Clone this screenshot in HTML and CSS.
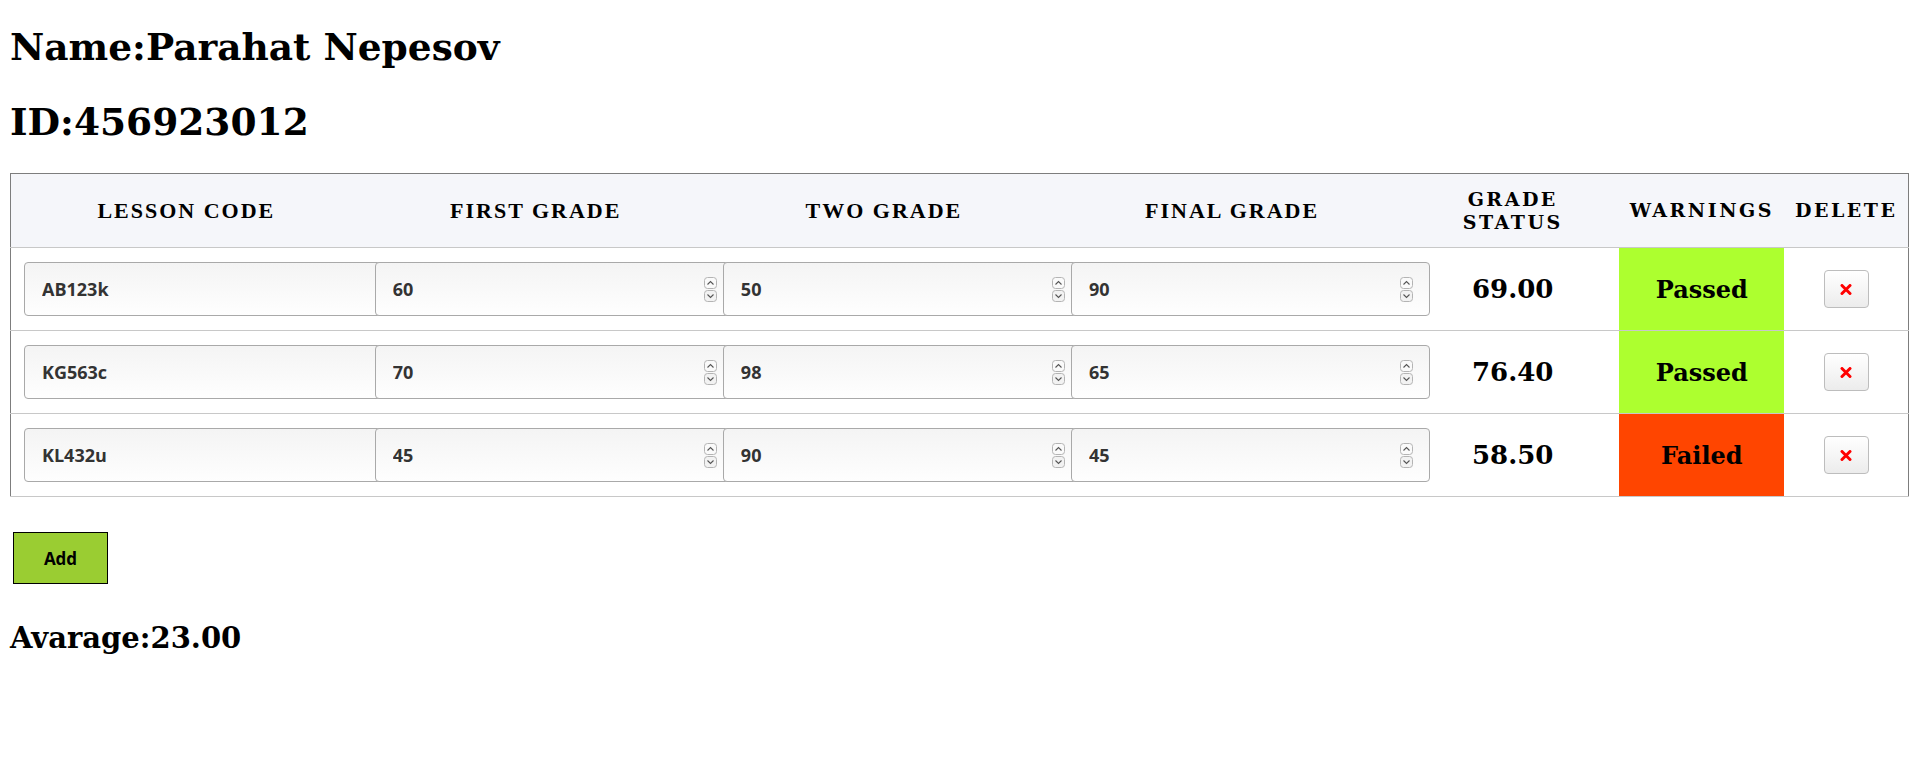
FILE: index.html
```html
<!DOCTYPE html>
<html>
<head>
<meta charset="utf-8">
<link rel="stylesheet" href="styles.css">
</head>
<body>
<h1 class="title first">Name:Parahat Nepesov</h1>
<h1 class="title">ID:456923012</h1>
<table class="grades">
  <colgroup>
    <col class="c-code">
    <col class="c-grade">
    <col class="c-grade">
    <col class="c-grade">
    <col class="c-status">
    <col class="c-warn">
    <col class="c-del">
  </colgroup>
  <thead>
    <tr>
      <th class="cond">LESSON CODE</th>
      <th class="cond">FIRST GRADE</th>
      <th class="cond">TWO GRADE</th>
      <th class="cond">FINAL GRADE</th>
      <th class="st">GRADE STATUS</th>
      <th>WARNINGS</th>
      <th>DELETE</th>
    </tr>
  </thead>
  <tbody>
    <tr>
      <td><div class="wrap"><input class="field" type="text" value="AB123k"></div></td>
      <td><div class="wrap"><input class="field" type="number" value="60"><svg class="spin" width="13" height="25" viewBox="0 0 13 25"><rect x="0.5" y="0.5" width="12" height="11" rx="3" fill="#fafafa" stroke="#b4b4b4"/><rect x="0.5" y="13.5" width="12" height="11" rx="3" fill="#f2f2f2" stroke="#b4b4b4"/><polyline points="3.5,7.5 6.5,4.5 9.5,7.5" fill="none" stroke="#555" stroke-width="1.1"/><polyline points="3.5,17.5 6.5,20.5 9.5,17.5" fill="none" stroke="#555" stroke-width="1.1"/></svg></div></td>
      <td><div class="wrap"><input class="field" type="number" value="50"><svg class="spin" width="13" height="25" viewBox="0 0 13 25"><rect x="0.5" y="0.5" width="12" height="11" rx="3" fill="#fafafa" stroke="#b4b4b4"/><rect x="0.5" y="13.5" width="12" height="11" rx="3" fill="#f2f2f2" stroke="#b4b4b4"/><polyline points="3.5,7.5 6.5,4.5 9.5,7.5" fill="none" stroke="#555" stroke-width="1.1"/><polyline points="3.5,17.5 6.5,20.5 9.5,17.5" fill="none" stroke="#555" stroke-width="1.1"/></svg></div></td>
      <td><div class="wrap"><input class="field" type="number" value="90"><svg class="spin" width="13" height="25" viewBox="0 0 13 25"><rect x="0.5" y="0.5" width="12" height="11" rx="3" fill="#fafafa" stroke="#b4b4b4"/><rect x="0.5" y="13.5" width="12" height="11" rx="3" fill="#f2f2f2" stroke="#b4b4b4"/><polyline points="3.5,7.5 6.5,4.5 9.5,7.5" fill="none" stroke="#555" stroke-width="1.1"/><polyline points="3.5,17.5 6.5,20.5 9.5,17.5" fill="none" stroke="#555" stroke-width="1.1"/></svg></div></td>
      <td class="score">69.00</td>
      <td class="warn passed">Passed</td>
      <td class="del"><button class="delbtn"><svg width="12" height="11" viewBox="0 0 12 11"><path d="M2 1.5 L10 9.5 M10 1.5 L2 9.5" stroke="#f00" stroke-width="3" stroke-linecap="round"/></svg></button></td>
    </tr>
    <tr>
      <td><div class="wrap"><input class="field" type="text" value="KG563c"></div></td>
      <td><div class="wrap"><input class="field" type="number" value="70"><svg class="spin" width="13" height="25" viewBox="0 0 13 25"><rect x="0.5" y="0.5" width="12" height="11" rx="3" fill="#fafafa" stroke="#b4b4b4"/><rect x="0.5" y="13.5" width="12" height="11" rx="3" fill="#f2f2f2" stroke="#b4b4b4"/><polyline points="3.5,7.5 6.5,4.5 9.5,7.5" fill="none" stroke="#555" stroke-width="1.1"/><polyline points="3.5,17.5 6.5,20.5 9.5,17.5" fill="none" stroke="#555" stroke-width="1.1"/></svg></div></td>
      <td><div class="wrap"><input class="field" type="number" value="98"><svg class="spin" width="13" height="25" viewBox="0 0 13 25"><rect x="0.5" y="0.5" width="12" height="11" rx="3" fill="#fafafa" stroke="#b4b4b4"/><rect x="0.5" y="13.5" width="12" height="11" rx="3" fill="#f2f2f2" stroke="#b4b4b4"/><polyline points="3.5,7.5 6.5,4.5 9.5,7.5" fill="none" stroke="#555" stroke-width="1.1"/><polyline points="3.5,17.5 6.5,20.5 9.5,17.5" fill="none" stroke="#555" stroke-width="1.1"/></svg></div></td>
      <td><div class="wrap"><input class="field" type="number" value="65"><svg class="spin" width="13" height="25" viewBox="0 0 13 25"><rect x="0.5" y="0.5" width="12" height="11" rx="3" fill="#fafafa" stroke="#b4b4b4"/><rect x="0.5" y="13.5" width="12" height="11" rx="3" fill="#f2f2f2" stroke="#b4b4b4"/><polyline points="3.5,7.5 6.5,4.5 9.5,7.5" fill="none" stroke="#555" stroke-width="1.1"/><polyline points="3.5,17.5 6.5,20.5 9.5,17.5" fill="none" stroke="#555" stroke-width="1.1"/></svg></div></td>
      <td class="score">76.40</td>
      <td class="warn passed">Passed</td>
      <td class="del"><button class="delbtn"><svg width="12" height="11" viewBox="0 0 12 11"><path d="M2 1.5 L10 9.5 M10 1.5 L2 9.5" stroke="#f00" stroke-width="3" stroke-linecap="round"/></svg></button></td>
    </tr>
    <tr>
      <td><div class="wrap"><input class="field" type="text" value="KL432u"></div></td>
      <td><div class="wrap"><input class="field" type="number" value="45"><svg class="spin" width="13" height="25" viewBox="0 0 13 25"><rect x="0.5" y="0.5" width="12" height="11" rx="3" fill="#fafafa" stroke="#b4b4b4"/><rect x="0.5" y="13.5" width="12" height="11" rx="3" fill="#f2f2f2" stroke="#b4b4b4"/><polyline points="3.5,7.5 6.5,4.5 9.5,7.5" fill="none" stroke="#555" stroke-width="1.1"/><polyline points="3.5,17.5 6.5,20.5 9.5,17.5" fill="none" stroke="#555" stroke-width="1.1"/></svg></div></td>
      <td><div class="wrap"><input class="field" type="number" value="90"><svg class="spin" width="13" height="25" viewBox="0 0 13 25"><rect x="0.5" y="0.5" width="12" height="11" rx="3" fill="#fafafa" stroke="#b4b4b4"/><rect x="0.5" y="13.5" width="12" height="11" rx="3" fill="#f2f2f2" stroke="#b4b4b4"/><polyline points="3.5,7.5 6.5,4.5 9.5,7.5" fill="none" stroke="#555" stroke-width="1.1"/><polyline points="3.5,17.5 6.5,20.5 9.5,17.5" fill="none" stroke="#555" stroke-width="1.1"/></svg></div></td>
      <td><div class="wrap"><input class="field" type="number" value="45"><svg class="spin" width="13" height="25" viewBox="0 0 13 25"><rect x="0.5" y="0.5" width="12" height="11" rx="3" fill="#fafafa" stroke="#b4b4b4"/><rect x="0.5" y="13.5" width="12" height="11" rx="3" fill="#f2f2f2" stroke="#b4b4b4"/><polyline points="3.5,7.5 6.5,4.5 9.5,7.5" fill="none" stroke="#555" stroke-width="1.1"/><polyline points="3.5,17.5 6.5,20.5 9.5,17.5" fill="none" stroke="#555" stroke-width="1.1"/></svg></div></td>
      <td class="score">58.50</td>
      <td class="warn failed">Failed</td>
      <td class="del"><button class="delbtn"><svg width="12" height="11" viewBox="0 0 12 11"><path d="M2 1.5 L10 9.5 M10 1.5 L2 9.5" stroke="#f00" stroke-width="3" stroke-linecap="round"/></svg></button></td>
    </tr>
  </tbody>
</table>
<button class="add">Add</button>
<h2 class="avg">Avarage:23.00</h2>
</body>
</html>
```
FILE: styles.css
```css
html, body {
  margin: 0;
  padding: 0;
  background: #fff;
}
body {
  padding: 0 10px;
  font-family: "DejaVu Serif", serif;
  color: #000;
}
.title {
  font-family: "DejaVu Serif", serif;
  font-weight: bold;
  font-size: 37.5px;
  margin: 0;
  line-height: 44px;
}
.title.first {
  padding-top: 25px;
}
.title + .title {
  margin-top: 31px;
}
.grades {
  margin-top: 29px;
  width: 1899px;
  border-collapse: collapse;
  border: 1px solid #7d7d7d;
  table-layout: fixed;
}
.c-code { width: 351px; }
.c-grade { width: 348px; }
.c-status { width: 213px; }
.c-warn { width: 165px; }
.c-del { width: 124px; }
.grades thead tr {
  background: #f5f6fa;
  height: 74px;
}
.grades th {
  box-sizing: border-box;
  font-family: "DejaVu Serif", serif;
  font-weight: bold;
  font-size: 19px;
  letter-spacing: 2.5px;
  line-height: 23px;
  border-bottom: 1px solid #c8c8c8;
  padding: 0 6px;
  white-space: nowrap;
}
.grades th.cond {
  font-family: "Liberation Serif", "Times New Roman", serif;
  font-size: 22px;
  letter-spacing: 2px;
}
.grades th.st {
  white-space: normal;
  padding: 0 20px;
}
.grades tbody tr {
  height: 83px;
  border-bottom: 1px solid #c8c8c8;
}
.grades td {
  box-sizing: border-box;
  padding: 0 0 0 13px;
  text-align: center;
}
.wrap {
  position: relative;
  width: 359px;
  height: 54px;
}
.field {
  display: block;
  width: 359px;
  height: 54px;
  box-sizing: border-box;
  border: 1px solid #a9a9a9;
  border-radius: 4px;
  background: linear-gradient(#f4f4f4, #fefefe);
  font-family: "Open Sans", sans-serif;
  font-weight: bold;
  font-size: 18px;
  color: #333;
  padding: 0 34px 0 17px;
  margin: 0;
  -moz-appearance: textfield;
}
.field::-webkit-inner-spin-button,
.field::-webkit-outer-spin-button {
  -webkit-appearance: none;
  margin: 0;
}
.spin {
  position: absolute;
  right: 17px;
  top: 15px;
  display: block;
}
.grades td.score {
  font-weight: bold;
  font-size: 26px;
  padding: 0;
}
.grades td.warn {
  font-weight: bold;
  font-size: 24px;
  padding: 0;
}
.passed { background: #adff2f; }
.failed { background: #ff4500; }
.grades td.del {
  padding: 0;
}
.delbtn {
  width: 45px;
  height: 38px;
  border: 1px solid #bdbdbd;
  border-radius: 4px;
  background: linear-gradient(#ffffff, #ececec);
  padding: 0;
  display: inline-flex;
  align-items: center;
  justify-content: center;
  vertical-align: middle;
}
.delbtn svg {
  display: block;
}
.add {
  display: block;
  margin: 35px 0 0 3px;
  width: 95px;
  height: 52px;
  border: 1px solid #000;
  background: #9acd32;
  font-family: "Open Sans", sans-serif;
  font-weight: bold;
  font-size: 17px;
  color: #000;
  padding: 0;
}
.avg {
  font-family: "DejaVu Serif", serif;
  font-weight: bold;
  font-size: 29px;
  margin: 37px 0 0;
}
```
